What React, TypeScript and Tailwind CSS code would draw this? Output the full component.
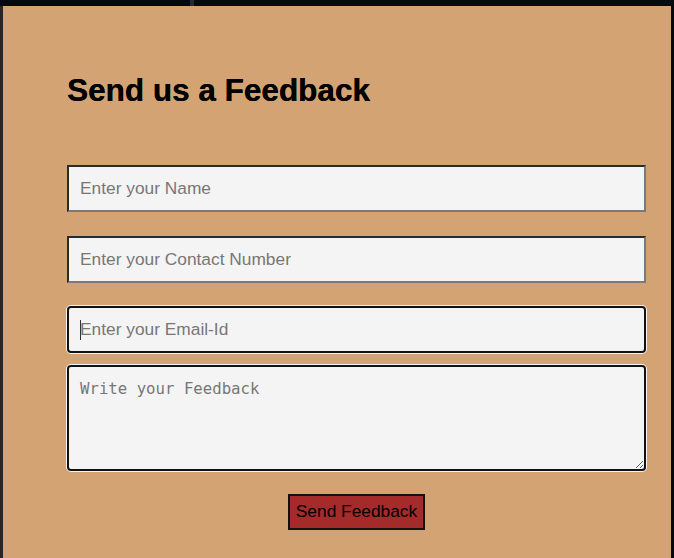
import React from "react";

export default function App() {
  const arial = { fontFamily: '"Liberation Sans", Arial, sans-serif' };
  return (
    <div className="w-[674px] h-[558px] bg-[#05080f] flex flex-col overflow-hidden" style={arial}>
      <div className="h-[6px] flex shrink-0">
        <div className="w-[190px] bg-[#030610]" />
        <div className="w-[4px] bg-[#2a2a2c]" />
        <div className="flex-1 bg-[#08090b]" />
      </div>
      <div className="flex flex-1">
        <div className="w-[3px] bg-[#262626] shrink-0" />
        <div className="w-[668px] h-[552px] bg-[#d4a373] pt-[66px] pl-[64px]">
          <h2 className="text-[31.5px] leading-[37px] font-bold text-black m-0 [text-shadow:0.3px_0_0_#000]">Send us a Feedback</h2>
          <form className="w-[579px] mt-[56px] flex flex-col">
            <input
              type="text"
              placeholder="Enter your Name"
              className="h-[47px] w-full bg-[#f4f4f4] border-2 border-t-[#2b2b2b] border-l-[#2b2b2b] border-b-[#7a7a7a] border-r-[#7a7a7a] px-[11px] text-[17.33px] text-black placeholder:text-[#777777] outline-none"
            />
            <input
              type="text"
              placeholder="Enter your Contact Number"
              className="mt-[24px] h-[47px] w-full bg-[#f4f4f4] border-2 border-t-[#2b2b2b] border-l-[#2b2b2b] border-b-[#7a7a7a] border-r-[#7a7a7a] px-[11px] text-[17.33px] text-black placeholder:text-[#777777] outline-none"
            />
            <div className="relative mt-[23px]">
              <input
                type="text"
                placeholder="Enter your Email-Id"
                className="h-[47px] w-full bg-[#f4f4f4] border-2 border-[#111] rounded-[4px] ring-1 ring-[#f4f4f4] px-[11px] text-[17.33px] text-black placeholder:text-[#777777] outline-none"
              />
              <span className="absolute left-[13px] top-[14px] w-px h-[20px] bg-[#333]" />
            </div>
            <textarea
              placeholder="Write your Feedback"
              className="mt-[12px] h-[106px] w-full bg-[#f4f4f4] border-2 border-[#111] rounded-[4px] ring-1 ring-[#f4f4f4] px-[11px] pt-[13px] text-[15.7px] leading-[18px] text-black placeholder:text-[#777777] outline-none"
              style={{ fontFamily: '"DejaVu Sans Mono", monospace' }}
            />
            <div className="flex justify-center mt-[23px]">
              <button
                type="button"
                className="w-[137px] h-[36px] bg-[#a52a2a] border-2 border-[#111] text-black text-[17.33px] leading-none"
              >
                Send Feedback
              </button>
            </div>
          </form>
        </div>
      </div>
    </div>
  );
}
